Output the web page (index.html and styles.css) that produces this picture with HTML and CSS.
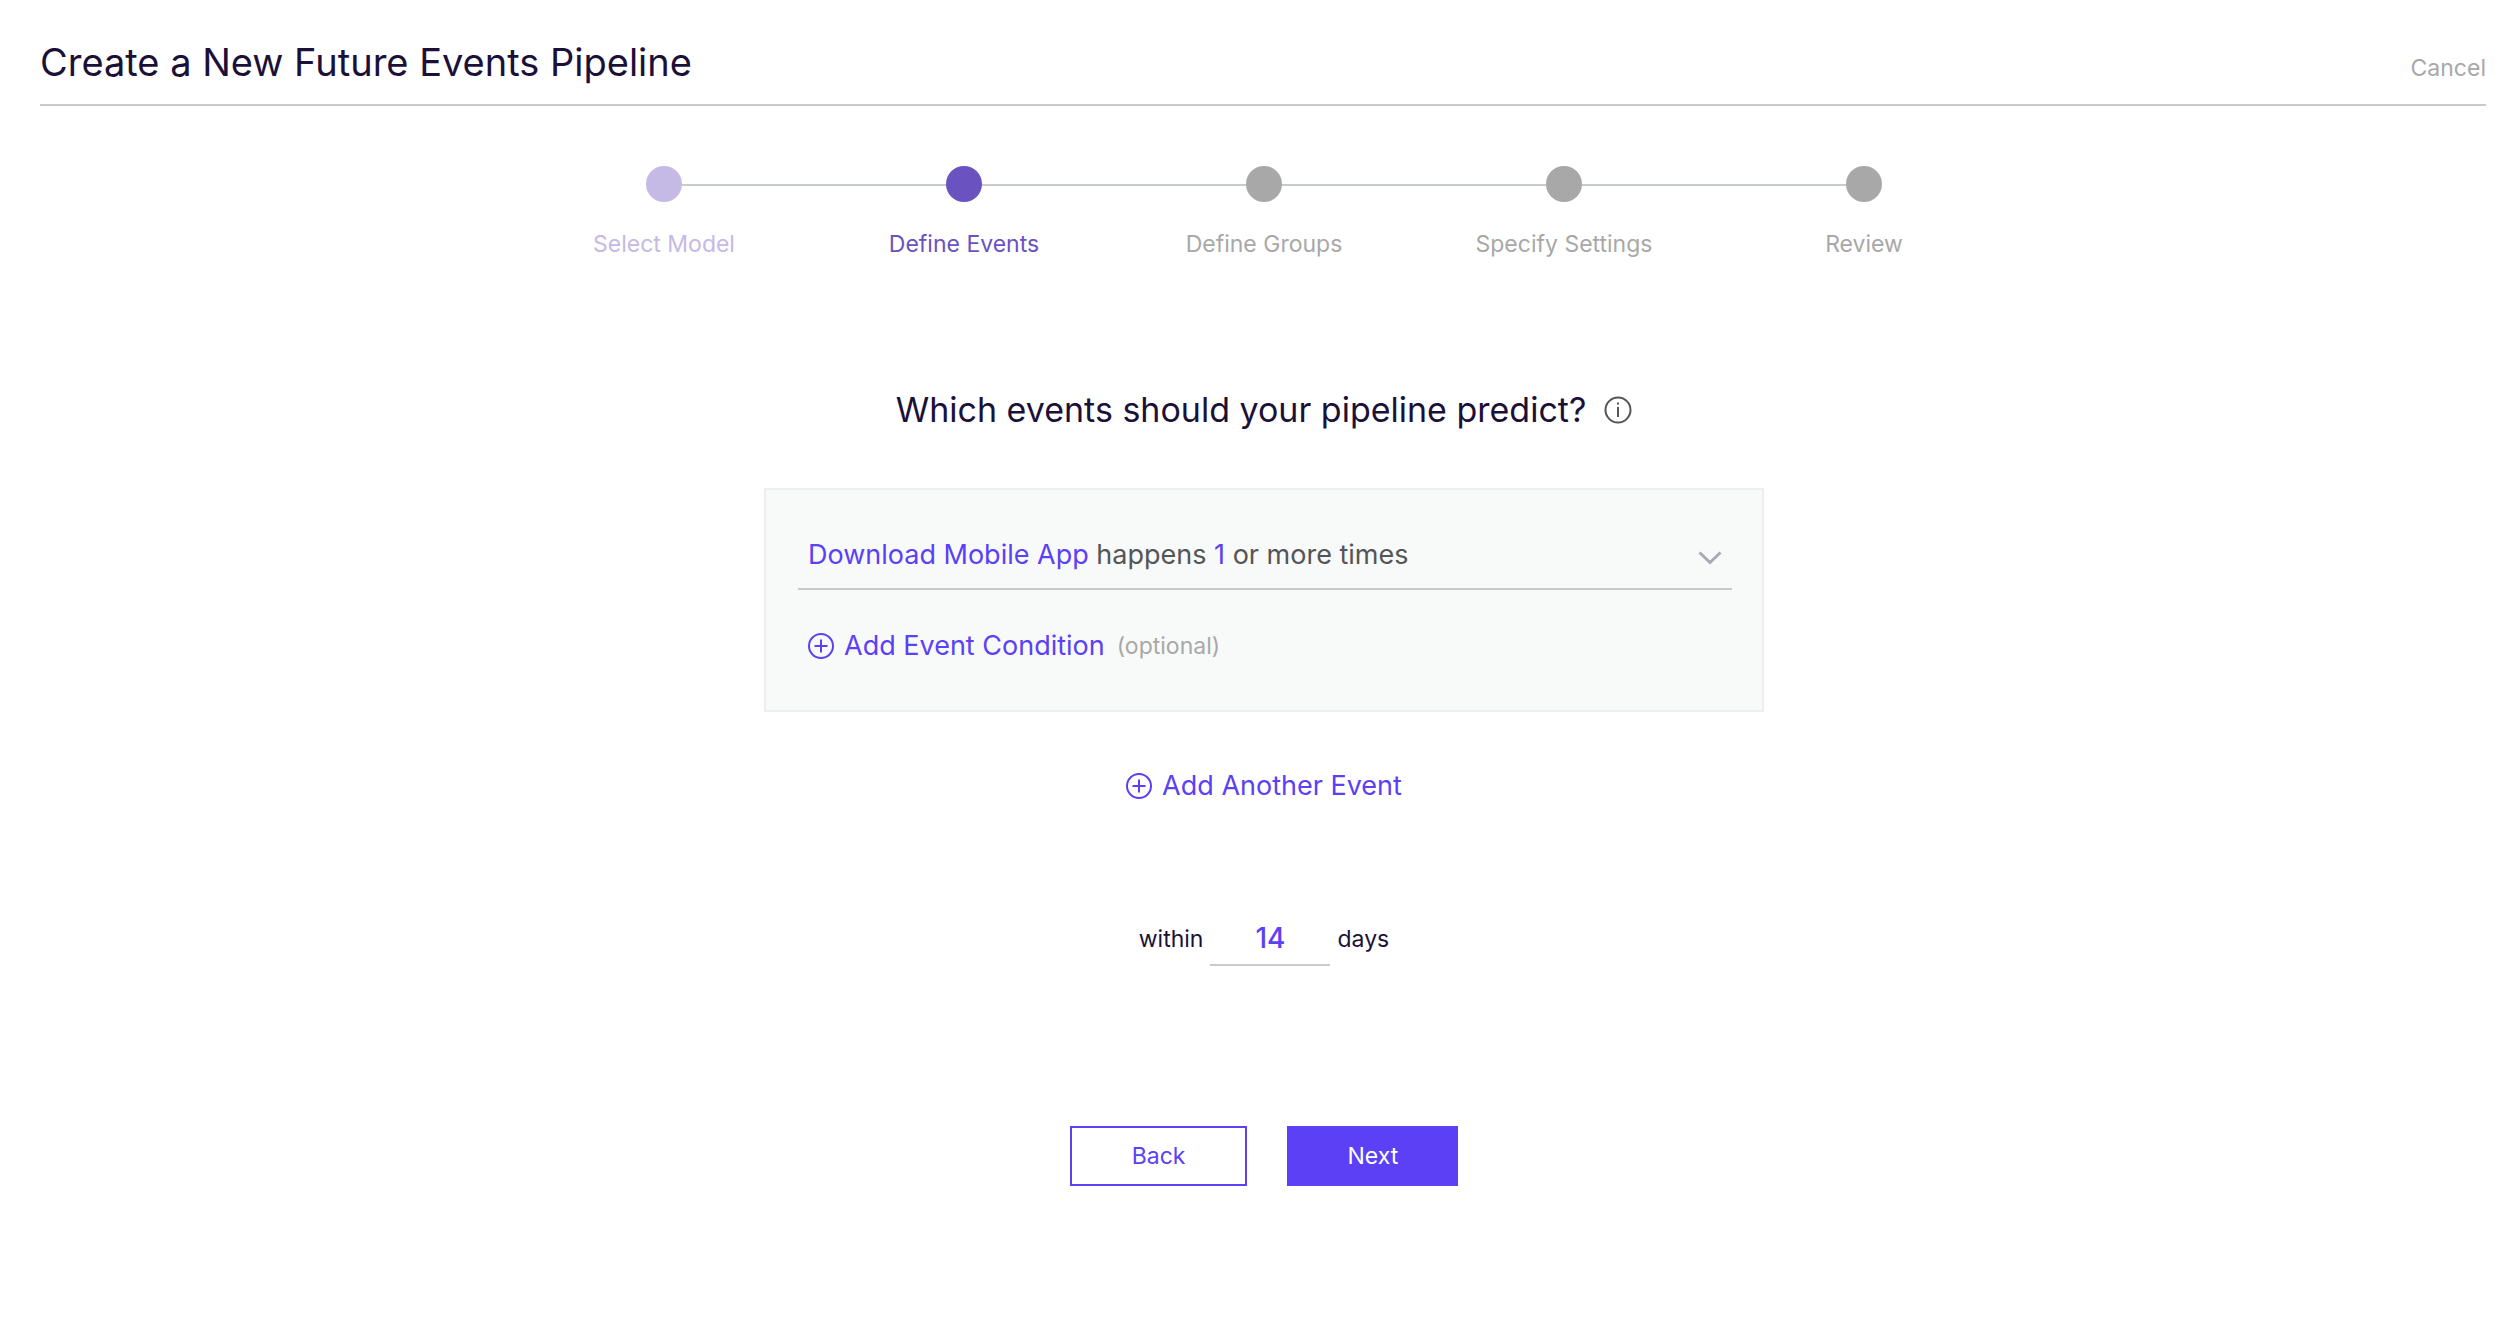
FILE: index.html
```html
<!DOCTYPE html>
<html lang="en">
<head>
    <meta charset="UTF-8">
    <meta name="viewport" content="width=device-width, initial-scale=1.0">
    <title>Create a New Future Events Pipeline</title>
    <link rel="stylesheet" href="styles.css">
</head>
<body>
    <header class="header">
        <h1>Create a New Future Events Pipeline</h1>
        <a href="#" class="cancel">Cancel</a>
    </header>

    <main class="container">
        <ol class="steps">
            <li class="step done"><span class="dot"></span>Select Model</li>
            <li class="step active" aria-current="step"><span class="dot"></span>Define Events</li>
            <li class="step"><span class="dot"></span>Define Groups</li>
            <li class="step"><span class="dot"></span>Specify Settings</li>
            <li class="step"><span class="dot"></span>Review</li>
        </ol>

        <form id="eventForm" class="event-form">
            <div class="question">
                <h2>Which events should your pipeline predict?</h2>
                <svg class="info" viewBox="0 0 28 28" role="img" aria-label="Info">
                    <circle cx="14" cy="14" r="12.5" />
                    <path d="M14 11V21M14 6.5V8.5" />
                </svg>
            </div>

            <div class="card">
                <button type="button" class="event-select" aria-haspopup="listbox">
                    <span><span class="value">Download Mobile App</span> happens <span class="value">1</span> or more times</span>
                    <svg class="chevron" viewBox="0 0 24 16">
                        <path d="M1.5 2.5L12 12.5L22.5 2.5" />
                    </svg>
                </button>
                <div class="condition">
                    <button type="button" class="add-btn">
                        <svg class="plus" viewBox="0 0 26 26">
                            <circle cx="13" cy="13" r="12" />
                            <path d="M13 6.5V19.5M6.5 13H19.5" />
                        </svg>
                        Add Event Condition
                    </button>
                    <span class="optional">(optional)</span>
                </div>
            </div>

            <button type="button" class="add-btn">
                <svg class="plus" viewBox="0 0 26 26">
                    <circle cx="13" cy="13" r="12" />
                    <path d="M13 6.5V19.5M6.5 13H19.5" />
                </svg>
                Add Another Event
            </button>

            <div class="within">
                <label for="days">within</label>
                <input type="text" id="days" name="days" value="14">
                <label for="days">days</label>
            </div>

            <div class="buttons">
                <button type="button" class="back">Back</button>
                <button type="submit" class="next">Next</button>
            </div>
        </form>
    </main>
</body>
</html>
```

FILE: styles.css
```css
* {
    box-sizing: border-box;
}
body {
    font-family: Inter, "Liberation Sans", sans-serif;
    font-size: 23px;
    line-height: 28px;
    margin: 0;
    padding: 32px 34px 32px 40px;
    background-color: #fff;
    color: #1b1138;
}
h1, h2 {
    margin: 0;
    font-weight: 400;
}
button, input {
    font-family: inherit;
    font-size: 23px;
    line-height: 28px;
    margin: 0;
    padding: 0;
    border: none;
    border-radius: 0;
    background: none;
}
button {
    cursor: pointer;
}
svg {
    flex: none;
    fill: none;
    stroke: currentColor;
    stroke-width: 2;
}
.header {
    display: flex;
    justify-content: space-between;
    align-items: flex-end;
    height: 74px;
    padding-bottom: 16px;
    border-bottom: 2px solid #c8cbca;
}
.header h1 {
    font-size: 38px;
    line-height: 52px;
}
.cancel {
    color: #a8a8a8;
    line-height: 40px;
    text-decoration: none;
}
.container {
    display: flex;
    flex-direction: column;
    align-items: center;
    padding-left: 2px;
}

/* Progress steps */
.steps {
    display: flex;
    width: 100%;
    max-width: 1500px;
    margin: 60px 0 0;
    padding: 0;
    list-style: none;
}
.step {
    position: relative;
    display: flex;
    flex: 1;
    flex-direction: column;
    align-items: center;
    gap: 28px;
    color: #a8a8a8;
}
.step:not(:last-child)::after {
    content: "";
    position: absolute;
    top: 18px;
    left: 50%;
    width: 100%;
    height: 2px;
    background-color: #c6cccb;
}
.dot {
    z-index: 1;
    width: 36px;
    height: 36px;
    border-radius: 50%;
    background-color: #a8a8a8;
}
.done {
    color: #c5b9e6;
}
.done .dot {
    background-color: #c5b9e6;
}
.active {
    color: #6a52c1;
}
.active .dot {
    background-color: #6a52c1;
}

/* Event form */
.event-form {
    display: flex;
    flex-direction: column;
    align-items: center;
    width: 100%;
    max-width: 1000px;
    margin-top: 128px;
}
.question {
    display: flex;
    align-items: center;
    gap: 18px;
}
.question h2 {
    font-size: 34px;
    line-height: 48px;
}
.info {
    width: 28px;
    height: 28px;
    color: #555;
}
.card {
    width: 100%;
    margin: 54px 0 60px;
    padding: 32px 30px 20px 32px;
    border: 2px solid #eceeed;
    background-color: #f8faf9;
}
.event-select {
    display: flex;
    justify-content: space-between;
    align-items: center;
    width: 100%;
    height: 68px;
    padding: 0 10px;
    border-bottom: 2px solid #c8cbca;
    color: #555;
    font-size: 27px;
    text-align: left;
}
.value, .add-btn {
    color: #5b40f6;
}
.chevron {
    width: 24px;
    height: 16px;
    margin-top: 6px;
    color: #a9a9b5;
    stroke-width: 3;
}
.condition {
    display: flex;
    align-items: center;
    gap: 12px;
    padding: 42px 10px 30px;
}
.add-btn {
    display: flex;
    align-items: center;
    gap: 10px;
    font-size: 27px;
}
.plus {
    width: 26px;
    height: 26px;
}
.optional {
    color: #a8a8a8;
}
.within {
    display: flex;
    align-items: center;
    gap: 7px;
    margin-top: 112px;
}
.within input {
    width: 120px;
    height: 54px;
    border-bottom: 2px solid #c8cbca;
    color: #5b40f6;
    font-size: 28px;
    font-weight: 500;
    text-align: center;
}
.buttons {
    display: flex;
    gap: 40px;
    margin-top: 160px;
}
.buttons button {
    height: 60px;
    padding: 0 60px;
}
.back {
    border: 2px solid #5b40f6;
    color: #5b40f6;
}
.next {
    background-color: #5b40f6;
    color: #fff;
}
```
